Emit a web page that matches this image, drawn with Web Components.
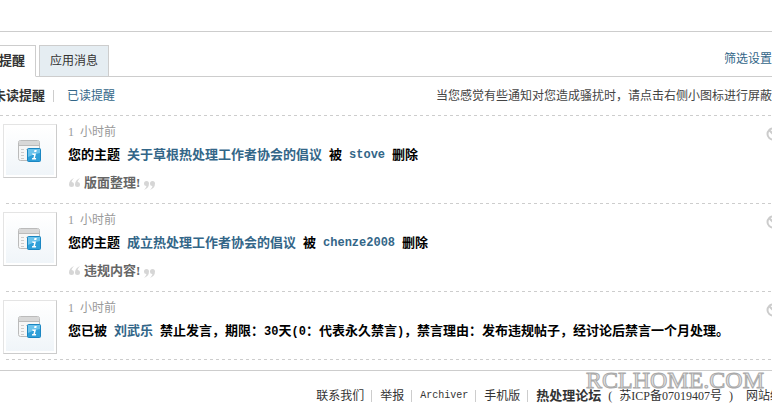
<!DOCTYPE html>
<html lang="zh-CN">
<head>
<meta charset="utf-8">
<title>提醒</title>
<style>
  body {
    margin: 0;
    overflow: hidden;
    background: #fff;
    color: #333;
    font: 12px/24px "Liberation Serif", "Noto Sans CJK SC", serif;
    --line: #cdcdcd;
    --link: #336688;
    --dash: repeating-linear-gradient(90deg, var(--line) 0 3px, transparent 3px 6px);
  }
</style>
</head>
<body>
<notice-page></notice-page>

<script>
class NoticeTabs extends HTMLElement {
  constructor() {
    super();
    this.attachShadow({ mode: 'open' });
  }

  connectedCallback() {
    this.shadowRoot.innerHTML = `
    <style>
      :host {
        display: flex;
        align-items: flex-end;
        gap: 3px;
        margin-top: 13px;
        border-bottom: 1px solid var(--line);
      }
      button {
        box-sizing: border-box;
        height: 32px;
        margin: 0 0 -1px;
        padding: 0 10px;
        border: 1px solid var(--line);
        background: #e5edf2;
        color: #333;
        font: inherit;
        white-space: nowrap;
      }
      button.on {
        border-bottom-color: #fff;
        background: #fff;
        font-size: 13px;
        font-weight: bold;
      }
      a {
        flex: none;
        align-self: center;
        margin: 0 0 4px auto;
        color: var(--link);
        text-decoration: none;
      }
    </style>
    <button type="button" class="on">提醒</button>
    <button type="button">应用消息</button>
    <a href="#">筛选设置</a>
    `;
  }
}

class NoticeFilter extends HTMLElement {
  constructor() {
    super();
    this.attachShadow({ mode: 'open' });
  }

  connectedCallback() {
    this.shadowRoot.innerHTML = `
    <style>
      :host {
        display: flex;
        align-items: center;
        box-sizing: border-box;
        height: 39px;
        padding: 0 0 2px 5px;
        background: var(--dash) 0 100% / 100% 1px no-repeat;
        white-space: nowrap;
      }
      a { color: var(--link); text-decoration: none; }
      a.on { color: #333; font-size: 13px; font-weight: bold; }
      i { width: 1px; height: 12px; margin: 0 13px 0 8px; background: var(--line); }
      p { margin: 0 0 0 auto; color: #444; }
    </style>
    <a href="#" class="on">未读提醒</a><i></i>
    <a href="#">已读提醒</a>
    <p>当您感觉有些通知对您造成骚扰时，请点击右侧小图标进行屏蔽</p>
    `;
  }
}

class NoticeItem extends HTMLElement {
  constructor() {
    super();
    this.attachShadow({ mode: 'open' });
  }

  connectedCallback() {
    this.shadowRoot.innerHTML = `
    <style>
      :host {
        display: flex;
        gap: 11px;
        padding: 8px 0 6px 15px;
        background: var(--dash) 18px 100% / 100% 1px no-repeat;
      }
      .pic {
        flex: none;
        width: 48px;
        height: 48px;
        padding: 2px;
        border: 1px solid;
        border-color: #e4e4e4 #ccc #ccc #e4e4e4;
        background: linear-gradient(#fff, #f0f5f9) content-box;
      }
      .body { flex: 1; min-width: 0; }
      .time {
        display: flex;
        gap: 6px;
        color: #999;
        line-height: 16px;
      }
      .text {
        display: flex;
        gap: 7px;
        margin-top: 3px;
        color: #000;
        font-size: 13px;
        font-weight: bold;
        white-space: nowrap;
      }
      button {
        align-self: flex-start;
        margin: 3px -8px 0 0;
        padding: 0;
        border: 0;
        background: none;
        line-height: 0;
      }
    </style>
    <svg class="pic" viewBox="0 0 48 48">
      <rect x="12.500" y="13.500" width="21" height="20" rx="2" fill="#f6f6f6" stroke="#bbb"/>
      <path d="M13 14h20v4h-20z" fill="#d8d8d8"/>
      <path d="M13 18.500h20" stroke="#bbb"/>
      <path d="M15 22.500h3M20 22.500h12M15 25.500h3M15 28.500h3M15 31.500h3" stroke="#ccc"/>
      <rect x="21.500" y="21.500" width="13" height="13" rx="1" fill="#2f9fd8" stroke="#1b86c2"/>
      <path d="M22 22h12v4q-7 1-12 4z" fill="#6cc3ec"/>
      <path d="M28.500 23h2.200l-.4 2h-2.200zM26 26.500h4l-1.100 4.500h1.300l-.3 1.500h-4l.3-1.500h1.200l.7-3h-1.300z" fill="#fff"/>
    </svg>
    <div class="body">
      <div class="time"><slot name="count"></slot><slot name="unit"></slot></div>
      <div class="text"><slot></slot></div>
      <slot name="quote"></slot>
    </div>
    <button type="button" aria-label="屏蔽">
      <svg width="14" height="14" viewBox="0 0 14 14" fill="none" stroke="#ccc" stroke-width="2">
        <circle cx="7" cy="7" r="5.500"/><path d="M3 3l8 8"/>
      </svg>
    </button>
    `;
  }
}

class NoticeQuote extends HTMLElement {
  constructor() {
    super();
    this.attachShadow({ mode: 'open' });
  }

  connectedCallback() {
    this.shadowRoot.innerHTML = `
    <style>
      :host {
        display: flex;
        align-items: center;
        gap: 3px;
        height: 20px;
        margin: 6px 0 5px;
        color: #666;
        font-size: 13px;
        font-weight: bold;
      }
      svg { flex: none; fill: #d6d6d6; }
      svg:last-child { margin-top: 4px; }
    </style>
    <svg width="13" height="10" viewBox="0 0 13 10"><path d="M6 0Q1 2 1 6.500a2.500 2.500 0 1 0 2.500-2.500Q4 2 6 0M12 0Q7 2 7 6.500a2.500 2.500 0 1 0 2.500-2.500Q10 2 12 0"/></svg>
    <slot></slot>
    <svg width="13" height="10" viewBox="0 0 13 10"><path d="M1 10Q6 8 6 3.500a2.500 2.500 0 1 0-2.500 2.500Q3 8 1 10M7 10Q12 8 12 3.500a2.500 2.500 0 1 0-2.500 2.500Q9 8 7 10"/></svg>
    `;
  }
}

class SiteFooter extends HTMLElement {
  constructor() {
    super();
    this.attachShadow({ mode: 'open' });
  }

  connectedCallback() {
    this.shadowRoot.innerHTML = `
    <style>
      :host {
        display: flex;
        justify-content: flex-end;
        position: relative;
        margin-top: 10px;
        padding-top: 13px;
        border-top: 1px solid var(--line);
        white-space: nowrap;
      }
      nav { display: flex; align-items: center; margin-right: -22px; }
      a { color: #333; text-decoration: none; }
      .mono { font-family: "Liberation Mono", monospace; font-size: 10px; }
      .name { font-size: 13px; font-weight: bold; }
      i { width: 1px; height: 12px; margin: 0 8px 0 7px; background: var(--line); }
      .icp { display: flex; gap: 7px; margin: 0 13px 0 7px; }
      .mark {
        position: absolute;
        top: 0;
        right: 8px;
        color: #e2e2e2;
        font-size: 24px;
        line-height: 18px;
        -webkit-text-stroke: 1px #aaa;
      }
    </style>
    <nav>
      <a href="#">联系我们</a><i></i>
      <a href="#">举报</a><i></i>
      <a href="#" class="mono">Archiver</a><i></i>
      <a href="#">手机版</a><i></i>
      <a href="#" class="name">热处理论坛</a>
      <span class="icp"><span>(</span><a href="#">苏ICP备07019407号</a><span>)</span></span>
      <a href="#">网站统计</a>
    </nav>
    <span class="mark">RCLHOME.COM</span>
    `;
  }
}

class NoticePage extends HTMLElement {
  constructor() {
    super();
    this.attachShadow({ mode: 'open' });
  }

  connectedCallback() {
    this.shadowRoot.innerHTML = `
    <style>
      :host {
        display: block;
        margin-left: -12px;
        padding-top: 31px;
      }
      main { border-top: 1px solid var(--line); }
      a { color: var(--link); text-decoration: none; }
      .mono { font-family: "Liberation Mono", monospace; font-size: 12px; }
    </style>
    <main>
      <notice-tabs></notice-tabs>
      <notice-filter></notice-filter>
      <notice-item>
        <span slot="count">1</span><span slot="unit">小时前</span>
        <span>您的主题</span><a href="#">关于草根热处理工作者协会的倡议</a><span>被</span><a href="#" class="mono">stove</a><span>删除</span>
        <notice-quote slot="quote">版面整理!</notice-quote>
      </notice-item>
      <notice-item>
        <span slot="count">1</span><span slot="unit">小时前</span>
        <span>您的主题</span><a href="#">成立热处理工作者协会的倡议</a><span>被</span><a href="#" class="mono">chenze2008</a><span>删除</span>
        <notice-quote slot="quote">违规内容!</notice-quote>
      </notice-item>
      <notice-item>
        <span slot="count">1</span><span slot="unit">小时前</span>
        <span>您已被</span><a href="#">刘武乐</a><span>禁止发言，期限：<span class="mono">30</span>天<span class="mono">(0</span>：代表永久禁言<span class="mono">)</span>，禁言理由：发布违规帖子，经讨论后禁言一个月处理。</span>
      </notice-item>
    </main>
    <site-footer></site-footer>
    `;
  }
}

customElements.define('notice-tabs', NoticeTabs);
customElements.define('notice-filter', NoticeFilter);
customElements.define('notice-quote', NoticeQuote);
customElements.define('notice-item', NoticeItem);
customElements.define('site-footer', SiteFooter);
customElements.define('notice-page', NoticePage);
</script>
</body>
</html>
